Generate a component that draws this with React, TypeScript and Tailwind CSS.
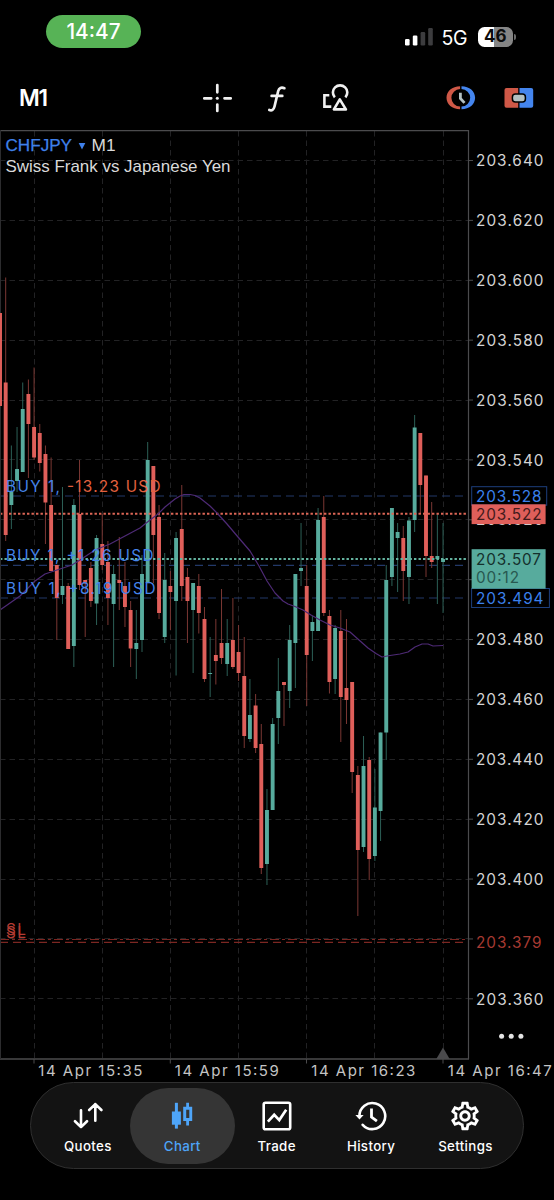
import React from "react";
import { MdOutlineSettings } from "react-icons/md";

const UP = "#57ab9d";
const DOWN = "#df5f5a";
const UP_WICK = "#2c5f56";
const DOWN_WICK = "#7a3733";
const STEP = 5.68;

type Candle = ["u" | "d", number, number, number, number];

// direction, high, body top, body bottom, low
const candles: Candle[] = [
  ["d", 313, 313, 406, 406],
  ["d", 277.5, 382.5, 535, 541],
  ["u", 445.5, 492, 505, 529],
  ["u", 427, 469, 481, 492],
  ["u", 382.5, 409, 472, 472],
  ["d", 379.5, 394, 424, 478],
  ["d", 367.5, 427, 457.5, 460],
  ["d", 424, 433, 463, 471.5],
  ["d", 445.5, 454, 502.5, 544],
  ["d", 457.5, 505, 571, 571],
  ["d", 565, 565, 598, 640],
  ["u", 487, 586, 595, 604],
  ["d", 583, 586, 649, 649],
  ["u", 499, 505, 646, 667],
  ["d", 460, 514, 585, 590],
  ["d", 580, 580, 583.5, 637],
  ["d", 562, 568, 601, 607],
  ["u", 535, 538, 603.5, 625],
  ["d", 514, 544, 565, 570],
  ["d", 541, 562, 598, 625],
  ["u", 565, 574, 604, 667],
  ["d", 537, 580, 583, 610],
  ["d", 562, 586, 607, 627],
  ["d", 601, 610, 648.5, 667],
  ["u", 610, 643, 649, 679],
  ["u", 555, 574, 640, 652],
  ["u", 442, 460, 583, 583],
  ["d", 466, 466, 535, 583],
  ["d", 505, 517, 613, 619],
  ["u", 553, 580, 637, 643],
  ["d", 571, 586, 592, 630],
  ["u", 532, 538, 601, 675.5],
  ["d", 485, 529, 586, 601],
  ["d", 568, 577, 601, 643],
  ["u", 583, 583, 610, 673],
  ["d", 574, 586, 613, 633.5],
  ["d", 607, 619, 679, 682],
  ["u", 637, 673, 674, 697],
  ["d", 619, 655, 661, 684.5],
  ["d", 589, 643, 658, 664],
  ["u", 619, 643, 664, 676],
  ["d", 598, 640, 667, 669],
  ["d", 625, 652, 673, 681],
  ["d", 637, 676, 736, 748],
  ["u", 679, 715, 739, 742],
  ["d", 694, 705.5, 748, 753],
  ["d", 724, 744, 868, 874],
  ["u", 789, 810, 864, 885],
  ["u", 718, 724, 810, 810],
  ["u", 658, 691, 718, 744],
  ["d", 682, 682, 685, 726],
  ["u", 625, 640, 691, 708],
  ["u", 574, 574, 643, 688],
  ["u", 523, 568, 571, 586],
  ["d", 565, 586, 655, 706],
  ["u", 616, 622, 631, 661],
  ["u", 508, 520, 631, 631],
  ["d", 496, 517, 613, 616],
  ["d", 610, 616, 682, 693.5],
  ["u", 625, 628, 679, 694],
  ["d", 610, 631, 697, 742],
  ["d", 619, 688, 700, 724],
  ["d", 682, 682, 772, 793],
  ["d", 766, 775, 850, 916],
  ["u", 736, 766, 847, 852],
  ["d", 757, 760, 859, 880],
  ["u", 769, 807.5, 856, 861],
  ["u", 732.5, 732.5, 811, 841],
  ["u", 565, 580, 732.5, 760],
  ["u", 508, 508, 577, 586],
  ["u", 523, 532, 538, 592],
  ["d", 526, 538, 571, 601],
  ["u", 517, 520.5, 577, 604],
  ["u", 415, 427.5, 520, 532],
  ["d", 433, 433, 485, 514],
  ["d", 475.5, 475.5, 556, 577],
  ["d", 502, 556, 562, 568],
  ["u", 514, 556, 559, 604],
  ["u", 523, 559, 562, 613],
];

const average =
  "0,610 20,596 35,581 45,574 57,570 72,565 80,560 95,550 110,544 125,536 140,528 150,520 158,514 165,507 175,499 180,496 184,494.5 190,494.5 195,495.5 200,498 210,506 217,513 227,524 238,537 250,551 259,566 267,581 275,593 283,601 288,604 295,606.5 303,610 311,615 320,620 330,625 340,628 350,632 359,640 368,648 376,653.5 382,657 390,655.5 400,654 408,652 415,647 422,644 428,644 433,646 443,645.5";

const prices = Array.from({ length: 15 }, (_, i) => ({
  label: (203.64 - i * 0.02).toFixed(3),
  y: 160.5 + i * 59.88,
}));

const columns = [34, 102, 170, 238.5, 306.5, 374.5, 443];

const times = [
  { x: 38.5, label: "14 Apr 15:35" },
  { x: 175, label: "14 Apr 15:59" },
  { x: 311.5, label: "14 Apr 16:23" },
  { x: 448, label: "14 Apr 16:47" },
];

function Label(props: { x: number; y: number; w: number; fill: string; size?: number; children: string }) {
  return (
    <text x={props.x} y={props.y} textLength={props.w} fill={props.fill} fontSize={props.size ?? 15.3}>
      {props.children}
    </text>
  );
}

function PriceChart() {
  return (
    <svg
      width="554"
      height="952"
      viewBox="0 130 554 952"
      className="block font-['Inter',sans-serif]"
    >
      <g stroke="#222224" strokeWidth="1" strokeDasharray="5.5 4">
        {prices.map((p) => (
          <line key={p.label} x1="0" x2="468" y1={Math.floor(p.y) + 0.5} y2={Math.floor(p.y) + 0.5} />
        ))}
        {columns.map((x) => (
          <line key={x} x1={Math.floor(x) + 0.5} x2={Math.floor(x) + 0.5} y1="131" y2="1058" />
        ))}
      </g>
      <g stroke="#233969" strokeWidth="1.2" strokeDasharray="8 5">
        <line x1="0" x2="468" y1="496" y2="496" />
        <line x1="0" x2="468" y1="565.3" y2="565.3" />
        <line x1="0" x2="468" y1="598" y2="598" />
      </g>
      <g stroke="#7c2722" strokeWidth="1.1">
        <line x1="0" x2="468" y1="939.5" y2="939.5" strokeDasharray="9 3 3 3" />
        <line x1="0" x2="468" y1="942.4" y2="942.4" strokeDasharray="8 5" />
      </g>

      {candles.map(([dir, high, top, bottom, low], i) => (
        <g key={i}>
          <rect x={i * STEP - 0.5} y={high} width="1" height={low - high} fill={dir === "u" ? UP_WICK : DOWN_WICK} />
          <rect x={i * STEP - 1.95} y={top} width="3.9" height={bottom - top} fill={dir === "u" ? UP : DOWN} />
        </g>
      ))}

      <line x1="0" x2="468" y1="513.8" y2="513.8" stroke="#dd6656" strokeWidth="2" strokeDasharray="2.4 2.1" />
      <line x1="0" x2="468" y1="559" y2="559" stroke="#64b3a0" strokeWidth="2" strokeDasharray="2.4 2.1" />
      <polyline points={average} fill="none" stroke="#4e2a76" strokeWidth="1.2" strokeLinejoin="round" />

      <g fill="none" stroke="#4b4b4d">
        <line x1="0" x2="469" y1="130.7" y2="130.7" strokeWidth="1.2" />
        <line x1="468.5" x2="468.5" y1="130" y2="1059" strokeWidth="1.2" />
        <line x1="0" x2="469" y1="1059" y2="1059" strokeWidth="1.6" />
        <line x1="0.5" x2="0.5" y1="130" y2="1059" stroke="#2c2c2e" />
        {[34, 170.3, 306.5, 443].map((x) => (
          <line key={x} x1={x} x2={x} y1="1059" y2="1063.5" />
        ))}
        {prices.map((p) => (
          <line key={p.label} x1="469" x2="473" y1={p.y} y2={p.y} />
        ))}
      </g>
      <rect x="0" y="313" width="1.8" height="93" fill={DOWN} />
      <path d="M443 1047.5L449.7 1059H436.3Z" fill="#4a4a4c" />

      <g fontSize="16.6" lengthAdjust="spacingAndGlyphs" className="font-['Liberation_Sans',sans-serif]">
        <text x="5.5" y="151.3" textLength="66.5" lengthAdjust="spacingAndGlyphs" fill="#3f80ea" stroke="#3f80ea" strokeWidth="0.25">
          CHFJPY
        </text>
        <text x="91.5" y="151.3" textLength="24" lengthAdjust="spacingAndGlyphs" fill="#dadada">
          M1
        </text>
        <text x="5.5" y="172.3" textLength="225" lengthAdjust="spacingAndGlyphs" fill="#dadada">
          Swiss Frank vs Japanese Yen
        </text>
      </g>
      <path d="M78.7 143H85.3L82 149.6Z" fill="#3f80ea" />

      <Label x={6} y={492} w={54} fill="#4584ea">BUY 1,</Label>
      <Label x={67} y={492} w={93.5} fill="#e3603f">-13.23 USD</Label>
      <Label x={6} y={560.7} w={147.5} fill="#4584ea">BUY 1, +1.26 USD</Label>
      <Label x={6} y={593.8} w={149.5} fill="#4584ea">BUY 1, +8.19 USD</Label>
      <Label x={6} y={935} w={20} fill="#b33c33">SL</Label>
      <Label x={6} y={938} w={20} fill="#b33c33">SL</Label>

      {prices
        .filter((p) => p.label !== "203.500" && p.label !== "203.380")
        .map((p) => (
          <Label key={p.label} x={476} y={p.y + 5.7} w={67.5} fill="#d4d4d4">
            {p.label}
          </Label>
        ))}
      <Label x={476} y={947.8} w={65.5} fill="#a63a32">203.379</Label>

      <rect x="471.7" y="486.7" width="75" height="18.5" fill="#000" stroke="#1d3f7d" />
      <Label x={476} y={501.7} w={65.5} fill="#3b80ec">203.528</Label>
      <rect x="471.6" y="504.3" width="74" height="19.8" fill={DOWN} />
      <Label x={476} y={519.7} w={65.5} fill="#431a1b">203.522</Label>
      <rect x="471.6" y="588.5" width="77.8" height="19" fill="#000" stroke="#1d3f7d" />
      <Label x={476} y={603.5} w={67.5} fill="#3b80ec">203.494</Label>
      <rect x="471.6" y="549.2" width="74" height="39.5" fill={UP} />
      <Label x={476} y={564.9} w={65} fill="#14302c">203.507</Label>
      <Label x={476} y={583.2} w={43} fill="#285850">00:12</Label>

      <g fill="#e4e4e4">
        <circle cx="501.6" cy="1036.3" r="2.5" />
        <circle cx="511.2" cy="1036.3" r="2.5" />
        <circle cx="520.9" cy="1036.3" r="2.5" />
      </g>

      {times.map((t) => (
        <Label key={t.label} x={t.x - 0.2} y={1076.4} w={104} fill="#c4c4c4" size={15}>
          {t.label}
        </Label>
      ))}
    </svg>
  );
}

function StatusBar() {
  return (
    <header className="flex h-[65px] shrink-0 items-start justify-between pr-[38px] pl-[46px]">
      <div className="mt-[15px] flex h-[33px] w-[95px] items-center justify-center rounded-full bg-[#57b356] pt-[1px] text-[20.8px] font-medium text-white">
        14:47
      </div>
      <div className="mt-[26px] flex h-[21px] items-center">
        <svg width="30" height="19" viewBox="0 0 30 19">
          <rect x="0" y="12" width="4.6" height="6.5" rx="1.2" fill="#fff" />
          <rect x="7.8" y="8.5" width="4.6" height="10" rx="1.2" fill="#fff" />
          <rect x="15.6" y="5" width="4.6" height="13.5" rx="1.2" fill="#3c3c3e" />
          <rect x="23.2" y="1" width="4.6" height="17.5" rx="1.2" fill="#3c3c3e" />
        </svg>
        <span className="mt-[3px] ml-[7px] w-[27px] text-[19.5px] leading-[21px] tracking-[-0.3px] text-white">5G</span>
        <div className="ml-[9px] flex h-[20px] w-[35.5px] items-center justify-center rounded-[6.5px] bg-linear-to-r from-white from-47% to-[#858585] to-47% text-[17px] font-bold text-[#0c0c0c]">
          46
        </div>
        <div className="ml-[1px] h-[6px] w-[2px] rounded-r-full bg-[#6b6b6b]" />
      </div>
    </header>
  );
}

function Toolbar() {
  return (
    <div className="flex h-[65px] shrink-0 items-center pt-[1px] pl-[19px]">
      <span className="w-[184px] text-[22.5px] font-semibold tracking-[-1.2px] text-white">M1</span>
      <svg width="29" height="30" viewBox="203 83 29 30" stroke="#f0f0f0" strokeWidth="2.7" strokeLinecap="round">
        <path d="M217.3 85V92.3M217.3 104.5V111M204.3 98.3H211.2M224.5 98.3H230.7" />
        <circle cx="217.3" cy="98.3" r="1.5" fill="#f0f0f0" stroke="none" />
      </svg>
      <svg width="20" height="30" viewBox="267 83 20 30" className="ml-[35px]" fill="none" stroke="#f0f0f0" strokeWidth="2.7" strokeLinecap="round">
        <path d="M284.4 88.2C281.5 86.9 279 87.8 278.2 91L274.5 106.5C273.6 110 271.8 111 269.3 110M271.6 95.9H282.3" />
      </svg>
      <svg width="28" height="30" viewBox="322 83 28 30" className="ml-[35px]" fill="none" stroke="#f0f0f0" strokeWidth="2.6">
        <path d="M329.3 95.2H324.4V106.6H331.3M334.8 97.4A7.2 7.2 0 1 1 345.4 97.4" />
        <path d="M339.8 99.3L333.9 109.4H345.9Z" strokeLinejoin="round" />
      </svg>
      <svg width="30" height="26" viewBox="445.5 85.5 30 26" className="ml-[95.5px]">
        <path d="M459.6 86.8C451.6 86.8 446 91.8 446 98.3S451.6 109.8 459.6 109.8V107A8.7 8.7 0 0 1 459.6 89.6Z" fill="#cf5847" />
        <path d="M461 86.8C469 86.8 474.6 91.8 474.6 98.3S469 109.8 461 109.8V107A8.7 8.7 0 0 0 461 89.6Z" fill="#4485ee" />
        <path d="M459.9 93.2V99L464 103.4" fill="none" stroke="#b3c0c2" strokeWidth="2.8" />
      </svg>
      <svg width="30" height="22" viewBox="503.5 87 30 22" className="ml-[28px]">
        <path d="M517.7 88H506A2 2 0 0 0 504 90V105.8A2 2 0 0 0 506 107.8H517.7Z" fill="#cf5847" />
        <path d="M519 88H530.7A2 2 0 0 1 532.7 90V105.8A2 2 0 0 1 530.7 107.8H519Z" fill="#4485ee" />
        <rect x="511.9" y="94" width="13" height="8" rx="3" fill="#b3c0c2" stroke="#000" strokeWidth="1.5" />
      </svg>
    </div>
  );
}

const icons: Record<string, React.ReactNode> = {
  Quotes: (
    <svg width="30" height="30" viewBox="73 1101.5 30 30" fill="none" stroke="#fff" strokeWidth="2.6" strokeLinecap="round" strokeLinejoin="round">
      <path d="M81 1110.8V1127.5M75 1121.7L81 1127.6L87 1121.7M95.3 1121.2V1104.6M89.2 1110.5L95.3 1104.6L101.4 1110.5" />
    </svg>
  ),
  Chart: (
    <svg width="30" height="30" viewBox="167.5 1101.5 30 30" fill="#4ea5f9">
      <rect x="172.4" y="1112" width="9" height="13.2" />
      <rect x="175.4" y="1103.3" width="3" height="25.8" />
      <path fillRule="evenodd" d="M186.7 1103.3H189.5V1107.3H192.7V1121.4H189.5V1126H186.7V1121.4H183.7V1107.3H186.7ZM186.7 1110.2V1118.5H189.8V1110.2Z" />
    </svg>
  ),
  Trade: (
    <svg width="30" height="30" viewBox="262 1101.2 30 30" fill="none" stroke="#fff" strokeWidth="2.6">
      <rect x="263.7" y="1102.9" width="26.5" height="26.5" rx="1.8" />
      <path d="M267.9 1121.8L274.2 1115L279.3 1120.3L286.2 1110" strokeWidth="2.7" />
    </svg>
  ),
  History: (
    <svg width="32" height="30" viewBox="354.5 1101.2 32 30" fill="none" stroke="#fff" strokeWidth="2.6">
      <path d="M358.9 1116.5A12.9 13 0 1 1 362.2 1125" strokeLinecap="round" />
      <path d="M354.9 1115.2H363.1L359 1119.8Z" fill="#fff" stroke="none" />
      <path d="M371 1108.7V1117.3L376.4 1121.4" strokeWidth="2.8" />
    </svg>
  ),
  Settings: <MdOutlineSettings size={34} color="#fff" />,
};

function TabBar() {
  return (
    <nav className="mx-[30px] flex h-[87px] w-[494px] shrink-0 items-center rounded-full border border-[#2f2f2f] bg-[#131313] pl-[9.7px]">
      {Object.keys(icons).map((name) => (
        <button
          key={name}
          className={
            name === "Chart"
              ? "-mx-[5.3px] flex h-[76px] w-[105px] shrink-0 flex-col items-center rounded-full bg-[#353535] text-[#4ea5f9]"
              : "flex h-[76px] w-[94.4px] shrink-0 flex-col items-center text-white"
          }
        >
          <span className="mt-[11px] flex h-[34px] items-center justify-center">{icons[name]}</span>
          <span className="mt-[4px] text-[13.3px] leading-[18px] font-medium tracking-[0.35px]">{name}</span>
        </button>
      ))}
    </nav>
  );
}

export default function App() {
  return (
    <div className="flex h-[1200px] w-[554px] flex-col overflow-hidden bg-black font-['Inter',sans-serif]">
      <StatusBar />
      <Toolbar />
      <PriceChart />
      <TabBar />
    </div>
  );
}
